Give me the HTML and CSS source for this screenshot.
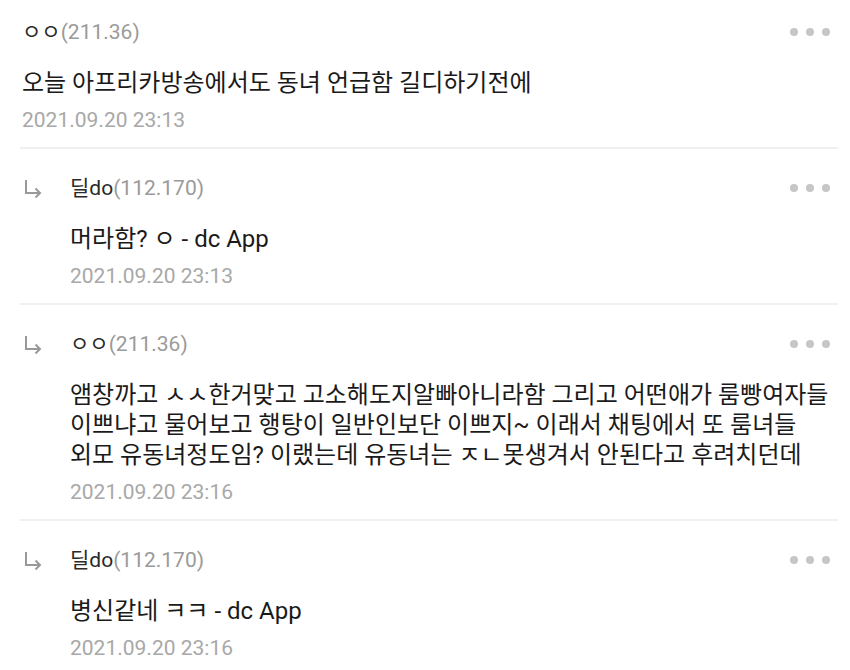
FILE: index.html
```html
<html>
<head>
<meta http-equiv="Content-Type" content="text/html; charset=utf-8" />
<title>댓글</title>
<link rel="stylesheet" href="styles.css">
</head>
<body>
<ul class="comments">
	<li class="cmt">
		<div class="cmt-body">
			<div class="cmt-head">
				<span class="nick">ㅇㅇ<span class="ip">(211.36)</span></span>
				<span class="more"><i></i><i></i><i></i></span>
			</div>
			<p class="cmt-text">오늘 아프리카방송에서도 동녀 언급함 길디하기전에</p>
			<div class="cmt-date">2021.09.20 23:13</div>
		</div>
	</li>
	<li class="cmt reply">
		<svg class="arrow" viewBox="0 0 18 18"><path d="M2 0 V13 H16 M11.5 8.5 L16 13 L11.5 17.5" fill="none" stroke="#999" stroke-width="2"/></svg>
		<div class="cmt-body">
			<div class="cmt-head">
				<span class="nick">딜do<span class="ip">(112.170)</span></span>
				<span class="more"><i></i><i></i><i></i></span>
			</div>
			<p class="cmt-text">머라함? ㅇ - dc App</p>
			<div class="cmt-date">2021.09.20 23:13</div>
		</div>
	</li>
	<li class="cmt reply">
		<svg class="arrow" viewBox="0 0 18 18"><path d="M2 0 V13 H16 M11.5 8.5 L16 13 L11.5 17.5" fill="none" stroke="#999" stroke-width="2"/></svg>
		<div class="cmt-body">
			<div class="cmt-head">
				<span class="nick">ㅇㅇ<span class="ip">(211.36)</span></span>
				<span class="more"><i></i><i></i><i></i></span>
			</div>
			<p class="cmt-text">앰창까고 ㅅㅅ한거맞고 고소해도지알빠아니라함 그리고 어떤애가 룸빵여자들 이쁘냐고 물어보고 행탕이 일반인보단 이쁘지~ 이래서 채팅에서 또 룸녀들 외모 유동녀정도임? 이랬는데 유동녀는 ㅈㄴ못생겨서 안된다고 후려치던데</p>
			<div class="cmt-date">2021.09.20 23:16</div>
		</div>
	</li>
	<li class="cmt reply">
		<svg class="arrow" viewBox="0 0 18 18"><path d="M2 0 V13 H16 M11.5 8.5 L16 13 L11.5 17.5" fill="none" stroke="#999" stroke-width="2"/></svg>
		<div class="cmt-body">
			<div class="cmt-head">
				<span class="nick">딜do<span class="ip">(112.170)</span></span>
				<span class="more"><i></i><i></i><i></i></span>
			</div>
			<p class="cmt-text">병신같네 ㅋㅋ - dc App</p>
			<div class="cmt-date">2021.09.20 23:16</div>
		</div>
	</li>
</ul>
</body>
</html>
```

FILE: styles.css
```css
body{
	margin:0;
	background:#fff;
	font-family:Roboto, "Noto Sans CJK KR", sans-serif;
}
.comments{
	list-style:none;
	margin:0;
	padding:0 12px 0 20px;
}
.cmt{
	display:flex;
	padding:27px 0 14px 2px;
	border-bottom:2px solid #f0f0f0;
}
.cmt:first-child{
	padding-top:20px;
}
.cmt:last-child{
	border-bottom:none;
}
.arrow{
	flex:none;
	width:18px;
	height:18px;
	margin:4px 28px 0 2px;
}
.cmt-body{
	flex:1;
	min-width:0;
}
.cmt-head{
	display:flex;
	justify-content:space-between;
	align-items:center;
	height:24px;
}
.nick{
	font-size:21px;
	line-height:24px;
	color:#2a2a2a;
}
.ip{
	color:#9a9a9a;
}
.more{
	display:flex;
	gap:8px;
	margin-right:8px;
}
.more i{
	width:8px;
	height:8px;
	border-radius:50%;
	background:#c6c6c6;
}
.cmt-text{
	margin:24px 0 0;
	font-size:24px;
	line-height:30px;
	color:#1a1a1a;
	word-break:keep-all;
}
.cmt-date{
	margin-top:9px;
	font-size:21px;
	line-height:26px;
	color:#a8a8a8;
}
```
